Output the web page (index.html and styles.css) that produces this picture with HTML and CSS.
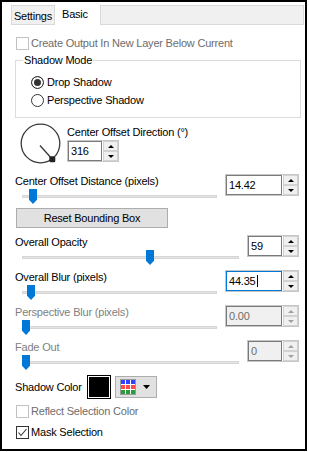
FILE: index.html
```html
<!DOCTYPE html>
<html lang="en">
<head>
  <meta charset="UTF-8">
  <title>Drop Shadow - Basic</title>
  <link rel="stylesheet" href="styles.css">
</head>
<body>
  <div class="window">
    <div class="tabs">
      <div class="tab">Settings</div>
      <div class="tab active">Basic</div>
      <div class="tab-strip"></div>
    </div>
    <div class="panel">
      <div class="check disabled"><span class="box"></span>Create Output In New Layer Below Current</div>
      <fieldset class="group">
        <legend>Shadow Mode</legend>
        <div class="radio"><span class="dot checked"></span>Drop Shadow</div>
        <div class="radio"><span class="dot"></span>Perspective Shadow</div>
      </fieldset>
      <div class="angle-row">
        <svg class="dial" width="41" height="41" viewBox="0 0 41 41">
          <circle cx="20.5" cy="20.5" r="19.3" fill="none" stroke="#3a3a3a" stroke-width="1.3"/>
          <line x1="20" y1="22.5" x2="32.3" y2="36.3" stroke="#3a3a3a" stroke-width="1.3"/>
          <rect x="29.3" y="33.3" width="6" height="6" rx="1.5" fill="#222"/>
        </svg>
        <div class="angle-col">
          <div class="label">Center Offset Direction (°)</div>
          <div class="spin narrow">
            <div class="spin-field">316</div>
            <div class="spin-btns"><span class="up"></span><span class="down"></span></div>
          </div>
        </div>
      </div>
      <div class="slider-row first">
        <div class="slider-col">
          <div class="label">Center Offset Distance (pixels)</div>
          <div class="track"><span class="thumb" style="left: 7px"></span></div>
        </div>
        <div class="spin wide">
          <div class="spin-field">14.42</div>
          <div class="spin-btns"><span class="up"></span><span class="down"></span></div>
        </div>
      </div>
      <button class="btn-reset">Reset Bounding Box</button>
      <div class="sliders">
        <div class="slider-row">
          <div class="slider-col">
            <div class="label">Overall Opacity</div>
            <div class="track"><span class="thumb" style="left: 124px"></span></div>
          </div>
          <div class="spin narrow">
            <div class="spin-field">59</div>
            <div class="spin-btns"><span class="up"></span><span class="down"></span></div>
          </div>
        </div>
        <div class="slider-row">
          <div class="slider-col">
            <div class="label">Overall Blur (pixels)</div>
            <div class="track"><span class="thumb" style="left: 5px"></span></div>
          </div>
          <div class="spin wide focus">
            <div class="spin-field">44.35<span class="caret"></span></div>
            <div class="spin-btns"><span class="up"></span><span class="down"></span></div>
          </div>
        </div>
        <div class="slider-row disabled">
          <div class="slider-col">
            <div class="label">Perspective Blur (pixels)</div>
            <div class="track"><span class="thumb" style="left: 0px"></span></div>
          </div>
          <div class="spin wide">
            <div class="spin-field">0.00</div>
            <div class="spin-btns"><span class="up"></span><span class="down"></span></div>
          </div>
        </div>
        <div class="slider-row disabled">
          <div class="slider-col">
            <div class="label">Fade Out</div>
            <div class="track"><span class="thumb" style="left: 0px"></span></div>
          </div>
          <div class="spin narrow">
            <div class="spin-field">0</div>
            <div class="spin-btns"><span class="up"></span><span class="down"></span></div>
          </div>
        </div>
      </div>
      <div class="color-row">
        <span class="label">Shadow Color</span>
        <span class="swatch"></span>
        <span class="color-pick">
          <svg width="16" height="16" viewBox="0 0 16 16">
            <rect x="0.5" y="0.5" width="15" height="15" fill="#fff" stroke="#9a9a9a"/>
            <rect x="1" y="1" width="4" height="4" fill="#3340ff"/>
            <rect x="6" y="1" width="4" height="4" fill="#3340ff"/>
            <rect x="11" y="1" width="4" height="4" fill="#3340ff"/>
            <rect x="1" y="6" width="4" height="4" fill="#ff4848"/>
            <rect x="6" y="6" width="4" height="4" fill="#ff4848"/>
            <rect x="11" y="6" width="4" height="4" fill="#ff4848"/>
            <rect x="1" y="11" width="4" height="4" fill="#2a9a3a"/>
            <rect x="6" y="11" width="4" height="4" fill="#2a9a3a"/>
            <rect x="11" y="11" width="4" height="4" fill="#2a9a3a"/>
          </svg>
          <svg class="drop" width="7" height="4" viewBox="0 0 7 4"><path d="M0 0H7L3.5 4Z" fill="#000"/></svg>
        </span>
      </div>
      <div class="check disabled reflect"><span class="box"></span>Reflect Selection Color</div>
      <div class="check mask">
        <span class="box">
          <svg width="11" height="11" viewBox="0 0 11 11"><path d="M1.5 5.5L4 8.5L9.5 2" fill="none" stroke="#333" stroke-width="1.1"/></svg>
        </span>Mask Selection
      </div>
    </div>
  </div>
</body>
</html>
```

FILE: styles.css
```css
body {
  margin: 0;
  background: #fff;
  font-family: "Liberation Sans", Arial, sans-serif;
  font-size: 11px;
  line-height: 13px;
  letter-spacing: -0.2px;
  color: #000;
}
.window {
  width: 307px;
  height: 451px;
  box-sizing: border-box;
  border: 2px solid #000;
  background: #fff;
}
.tabs {
  display: flex;
  align-items: flex-end;
  height: 23px;
  padding: 0 1px 0 9px;
}
.tab {
  box-sizing: border-box;
  width: 44px;
  height: 20px;
  padding-top: 4px;
  text-align: center;
  background: #f0f0f0;
  border: 1px solid #d9d9d9;
}
.tab.active {
  width: 45px;
  height: 23px;
  padding: 6px 0 0 7px;
  text-align: left;
  background: #fff;
  border: none;
}
.tab-strip {
  flex: 1;
  box-sizing: border-box;
  height: 20px;
  background: #f0f0f0;
  border: 1px solid #dadada;
}
.panel {
  padding: 12px 6px 0 13px;
}
.check {
  display: flex;
  align-items: center;
  gap: 2px;
  height: 13px;
  margin-left: 1px;
}
.check .box {
  box-sizing: border-box;
  width: 13px;
  height: 13px;
  border: 1px solid #333;
  background: #fff;
  display: flex;
}
.check.disabled {
  color: #6d6d6d;
}
.check.disabled .box {
  border-color: #c2c2c2;
}
.group {
  margin: 4px -2px 0 0;
  padding: 9px 0 10px 7px;
  border: 1px solid #dcdcdc;
  min-width: 0;
}
.group legend {
  padding: 0 1px;
}
.radio {
  display: flex;
  align-items: center;
  gap: 3px;
  height: 13px;
  margin-left: 8px;
}
.radio + .radio {
  margin-top: 5px;
}
.dot {
  box-sizing: border-box;
  width: 13px;
  height: 13px;
  border: 1px solid #333;
  border-radius: 50%;
  background: #fff;
}
.dot.checked {
  background: #333;
  box-shadow: inset 0 0 0 2px #fff;
}
.angle-row {
  display: flex;
  align-items: flex-start;
  margin-top: 5px;
}
.dial {
  margin-left: 5px;
}
.angle-col {
  display: flex;
  flex-direction: column;
  align-items: flex-start;
  margin-left: 6px;
}
.angle-col .label {
  margin-top: 3px;
}
.angle-col .spin {
  margin-top: 1px;
}
.spin {
  display: flex;
  gap: 1px;
  height: 20px;
  border: 1px solid #c6c6c6;
  background: #fff;
}
.spin-field {
  box-sizing: border-box;
  height: 20px;
  padding: 3px 0 0 2px;
  border: 1px solid #7a7a7a;
  white-space: nowrap;
}
.spin.wide .spin-field {
  width: 56px;
}
.spin.narrow .spin-field {
  width: 34px;
}
.spin.focus .spin-field {
  border-color: #0078d7;
}
.caret {
  display: inline-block;
  width: 1px;
  height: 12px;
  margin-left: 1px;
  vertical-align: -2px;
  background: #000;
}
.spin-btns {
  display: flex;
  flex-direction: column;
  width: 15px;
}
.spin-btns span {
  flex: 1;
  box-sizing: border-box;
  display: flex;
  align-items: center;
  justify-content: center;
  background: #f0f0f0;
  border: 1px solid #d2d2d2;
}
.spin-btns span::after {
  content: "";
  border-left: 3px solid transparent;
  border-right: 3px solid transparent;
}
.spin-btns .up::after {
  border-bottom: 3px solid #000;
}
.spin-btns .down::after {
  border-top: 3px solid #000;
}
.slider-row {
  display: flex;
  align-items: flex-start;
  height: 24px;
}
.slider-row.first {
  margin-top: 10px;
}
.slider-col {
  flex: 1;
}
.slider-col .label {
  margin-top: 1px;
  white-space: nowrap;
}
.track {
  position: relative;
  height: 3px;
  margin: 7px 8px 0 7px;
  background: #e4e4e4;
  box-shadow: inset 0 0 0 1px #d6d6d6;
}
.thumb {
  position: absolute;
  top: -6px;
  width: 8px;
  height: 15px;
  background: #0078d7;
  clip-path: polygon(0 0, 100% 0, 100% 72%, 50% 100%, 0 72%);
}
.slider-row.disabled .label {
  color: #808080;
}
.slider-row.disabled .spin-field {
  color: #6d6d6d;
  background: #f0f0f0;
}
.slider-row.disabled .spin-btns .up::after {
  border-bottom-color: #a0a0a0;
}
.slider-row.disabled .spin-btns .down::after {
  border-top-color: #a0a0a0;
}
.btn-reset {
  display: block;
  width: 152px;
  height: 20px;
  margin: 10px 0 0 1px;
  padding: 0;
  font: inherit;
  letter-spacing: inherit;
  color: #000;
  background: #e1e1e1;
  border: 1px solid #adadad;
}
.sliders {
  display: flex;
  flex-direction: column;
  gap: 11px;
  margin-top: 7px;
}
.color-row {
  display: flex;
  align-items: center;
  height: 24px;
  margin-top: 11px;
}
.swatch {
  box-sizing: border-box;
  width: 24px;
  height: 24px;
  margin-left: 5px;
  background: #000;
  border: 1px solid #000;
  box-shadow: inset 0 0 0 1px #fff;
}
.color-pick {
  box-sizing: border-box;
  display: flex;
  align-items: center;
  width: 42px;
  height: 22px;
  margin-left: 4px;
  padding-left: 4px;
  background: #e1e1e1;
  border: 1px solid #adadad;
}
.color-pick .drop {
  margin-left: 7px;
}
.check.reflect {
  margin-top: 6px;
}
.check.mask {
  margin-top: 8px;
}
.check.mask .box {
  align-items: center;
  justify-content: center;
}
```
